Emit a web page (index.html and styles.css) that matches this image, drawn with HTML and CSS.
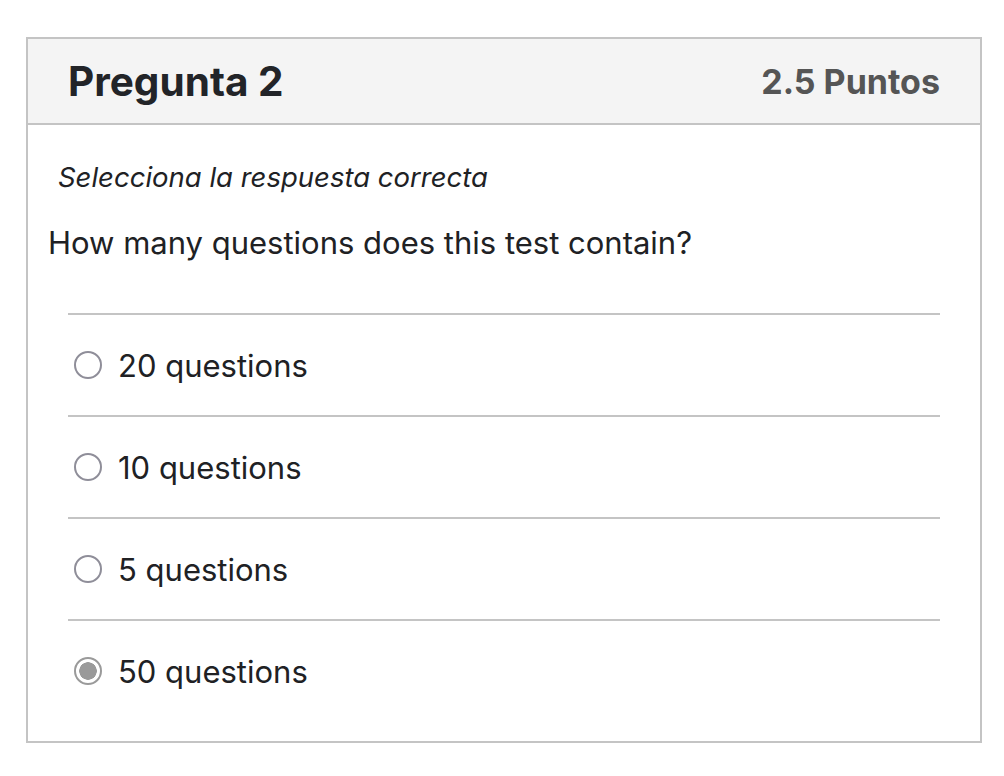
FILE: index.html
```html
<!DOCTYPE html>
<html lang="es">
<head>
  <meta charset="UTF-8">
  <meta name="viewport" content="width=device-width, initial-scale=1.0">
  <title>Pregunta 2</title>
  <link rel="stylesheet" href="styles.css">
</head>
<body>
  <div class="card">
    <div class="card-header">
      <h2>Pregunta 2</h2>
      <span class="points">2.5 Puntos</span>
    </div>
    <div class="card-body">
      <p class="hint">Selecciona la respuesta correcta</p>
      <p class="question">How many questions does this test contain?</p>
      <ul class="options">
        <li><label><input type="radio" name="q2" value="20"><span>20 questions</span></label></li>
        <li><label><input type="radio" name="q2" value="10"><span>10 questions</span></label></li>
        <li><label><input type="radio" name="q2" value="5"><span>5 questions</span></label></li>
        <li><label><input type="radio" name="q2" value="50" checked disabled><span>50 questions</span></label></li>
      </ul>
    </div>
  </div>
</body>
</html>
```

FILE: styles.css
```css
body { margin: 0; padding: 37px 22px 0 26px; font-family: Inter, "Noto Sans", sans-serif; color: #202124; background: #fff; }
.card { border: 2px solid #c4c4c4; }
.card-header { display: flex; justify-content: space-between; align-items: center; height: 84px; padding: 0 40px; background: #f4f4f4; border-bottom: 2px solid #c4c4c4; }
.card-header h2 { margin: 0; font-size: 40.5px; font-weight: 700; color: #222428; }
.points { font-size: 34px; font-weight: 700; color: #555; }
.card-body { padding: 36px 20px 20px; }
.hint { margin: 0 0 0 10px; font-size: 27.5px; font-style: italic; line-height: 32px; }
.question { margin: 32px 0 0; font-size: 31px; line-height: 36px; }
.options { list-style: none; margin: 52px 20px 0; padding: 0; }
.options li { border-top: 2px solid #c4c4c4; height: 100px; }
.options label { display: flex; align-items: center; gap: 16px; height: 100%; font-size: 31px; }
.options input { appearance: none; margin: 0 0 0 6px; width: 28px; height: 28px; border: 2px solid #8f8e99; border-radius: 50%; background: #fff; }
.options input:checked { border-color: #9a9a9a; background: radial-gradient(circle, #9a9a9a 0 8.5px, #fff 9px); }
```
